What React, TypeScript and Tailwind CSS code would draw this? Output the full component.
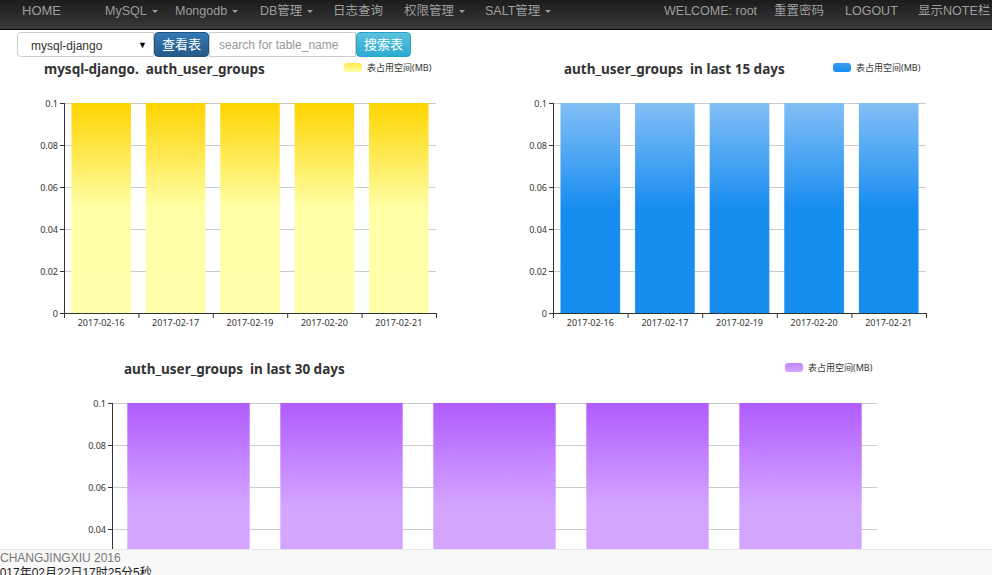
import React from 'react';

const dates = ['2017-02-16', '2017-02-17', '2017-02-19', '2017-02-20', '2017-02-21'];
const yTicks = ['0.1', '0.08', '0.06', '0.04', '0.02', '0'];

type ChartProps = {
    id: string;
    width: number;
    title: string;
    titleX: number;
    legendX: number;
    axisX: number;
    axisEnd: number;
    stops: [string, string, string];
    legendStops: [string, string];
};

function BarChart({ id, width, title, titleX, legendX, axisX, axisEnd, stops, legendStops }: ChartProps) {
    const top = 43;
    const step = 42;
    const bottom = top + step * 5;
    const cat = (axisEnd - axisX) / 5;

    return (
        <svg width={width} height={300} className="block shrink-0 font-['Noto_Sans','Noto_Sans_CJK_SC',sans-serif]">
            <defs>
                <linearGradient id={`bar-${id}`} x1="0" y1="0" x2="0" y2="1">
                    <stop offset="0%" stopColor={stops[0]} />
                    <stop offset="50%" stopColor={stops[1]} />
                    <stop offset="100%" stopColor={stops[2]} />
                </linearGradient>
                <linearGradient id={`leg-${id}`} x1="0" y1="0" x2="0" y2="1">
                    <stop offset="0%" stopColor={legendStops[0]} />
                    <stop offset="100%" stopColor={legendStops[1]} />
                </linearGradient>
            </defs>

            {/* title + legend */}
            <text x={titleX} y={14} fontSize={13.5} fontWeight={700} fill="#333" className="whitespace-pre">{title}</text>
            <rect x={legendX} y={3} width={18} height={9} rx={3} fill={`url(#leg-${id})`} />
            <text x={legendX + 23} y={11} fontSize={9} fill="#333">表占用空间(MB)</text>

            {/* grid + y labels */}
            {yTicks.map((t, i) => {
                const y = top + i * step + 0.5;
                return (
                    <g key={t}>
                        {i < 5 && <line x1={axisX} x2={axisEnd} y1={y} y2={y} stroke="#ccc" />}
                        <line x1={axisX - 4} x2={axisX} y1={y} y2={y} stroke="#333" />
                        <text x={axisX - 6} y={y + 3} fontSize={9} fill="#333" textAnchor="end">{t}</text>
                    </g>
                );
            })}

            {/* bars */}
            {dates.map((d, i) => (
                <rect
                    key={d}
                    x={axisX + i * cat + cat * 0.1}
                    y={top}
                    width={cat * 0.8}
                    height={bottom - top}
                    fill={`url(#bar-${id})`}
                />
            ))}

            {/* axes */}
            <line x1={axisX + 0.5} x2={axisX + 0.5} y1={top} y2={bottom} stroke="#333" />
            <line x1={axisX} x2={axisEnd} y1={bottom + 0.5} y2={bottom + 0.5} stroke="#333" />
            {[0, 1, 2, 3, 4, 5].map((i) => (
                <line key={i} x1={axisX + i * cat + 0.5} x2={axisX + i * cat + 0.5} y1={bottom} y2={bottom + 5} stroke="#333" />
            ))}
            {dates.map((d, i) => (
                <text key={d} x={axisX + i * cat + cat / 2} y={bottom + 13} fontSize={9} fill="#333" textAnchor="middle">{d}</text>
            ))}
        </svg>
    );
}

function Caret() {
    return <span className="inline-block w-0 h-0 ml-[5px] align-middle border-t-[3px] border-t-[#9d9d9d] border-x-[3px] border-x-transparent" />;
}

export default function App() {
    const leftNav = [
        { label: 'MySQL', caret: true, w: 'w-[70px]' },
        { label: 'Mongodb', caret: true, w: 'w-[85px]' },
        { label: 'DB管理', caret: true, w: 'w-[73px]' },
        { label: '日志查询', caret: false, w: 'w-[71px]' },
        { label: '权限管理', caret: true, w: 'w-[81px]' },
        { label: 'SALT管理', caret: true, w: 'w-[90px]' },
    ];
    const rightNav = [
        { label: 'WELCOME: root', w: 'w-[110px]' },
        { label: '重置密码', w: 'w-[71px]' },
        { label: 'LOGOUT', w: 'w-[73px]' },
        { label: '显示NOTE栏', w: 'w-[74px]' },
    ];

    return (
        <div className="min-h-screen bg-white font-['Liberation_Sans','Noto_Sans_CJK_SC',sans-serif]">
            {/* Top navbar */}
            <nav className="h-[30px] flex items-start pt-[3px] bg-linear-to-b from-[#1c1c1c] to-[#3a3a3a] border-b border-[#080808] text-[12.5px] leading-[16px] text-[#9d9d9d] whitespace-nowrap">
                <div className="pl-[22px] w-[105px] text-[13px]">HOME</div>
                {leftNav.map((n) => (
                    <div key={n.label} className={n.w}>
                        {n.label}
                        {n.caret && <Caret />}
                    </div>
                ))}
                <div className="flex-1" />
                {rightNav.map((n) => (
                    <div key={n.label} className={n.w}>{n.label}</div>
                ))}
            </nav>

            {/* Search row */}
            <div className="h-[30px] flex items-start pl-[17px] pt-[2px]">
                <div className="w-[137px] h-[25px] border border-[#ccc] rounded-l-[4px] flex items-center pl-[13px] pr-[6px] pt-[2px] text-[12px] text-[#333]">
                    <span className="flex-1">mysql-django</span>
                    <span className="text-[9px] text-black">▼</span>
                </div>
                <button className="w-[55px] h-[25px] rounded-[4px] border border-[#245580] bg-linear-to-b from-[#337ab7] to-[#265a88] text-white text-[13px] leading-none">查看表</button>
                <input
                    readOnly
                    placeholder="search for table_name"
                    className="w-[147px] h-[25px] border border-[#ccc] px-[9px] text-[12px] outline-none placeholder:text-[#999]"
                />
                <button className="w-[55px] h-[25px] rounded-[4px] border border-[#28a4c9] bg-linear-to-b from-[#5bc0de] to-[#2aabd2] text-white text-[13px] leading-none">搜索表</button>
            </div>

            {/* Charts */}
            <div className="flex">
                <BarChart
                    id="a"
                    width={489}
                    title="mysql-django.  auth_user_groups"
                    titleX={44}
                    legendX={344}
                    axisX={64}
                    axisEnd={436}
                    stops={['#ffd400', '#ffffa6', '#ffffaa']}
                    legendStops={['#ffe84a', '#ffffa8']}
                />
                <BarChart
                    id="b"
                    width={489}
                    title="auth_user_groups  in last 15 days"
                    titleX={75}
                    legendX={344}
                    axisX={64}
                    axisEnd={437}
                    stops={['#83bff6', '#188df0', '#188df0']}
                    legendStops={['#3a9ef2', '#188df0']}
                />
            </div>
            <BarChart
                id="c"
                width={978}
                title="auth_user_groups  in last 30 days"
                titleX={124}
                legendX={785}
                axisX={112}
                axisEnd={877}
                stops={['#b15cff', '#d4a5ff', '#d4a5ff']}
                legendStops={['#c185ff', '#d4a5ff']}
            />

            {/* Footer */}
            <footer className="fixed inset-x-0 bottom-0 h-[26px] overflow-hidden bg-[#f8f8f8] border-t border-[#e7e7e7] text-[12px] leading-[15px] pt-[1px]">
                <div className="text-[#777]">CHANGJINGXIU 2016</div>
                <div className="-ml-[7px] text-[#222]">2017年02月22日17时25分5秒</div>
            </footer>
        </div>
    );
}
